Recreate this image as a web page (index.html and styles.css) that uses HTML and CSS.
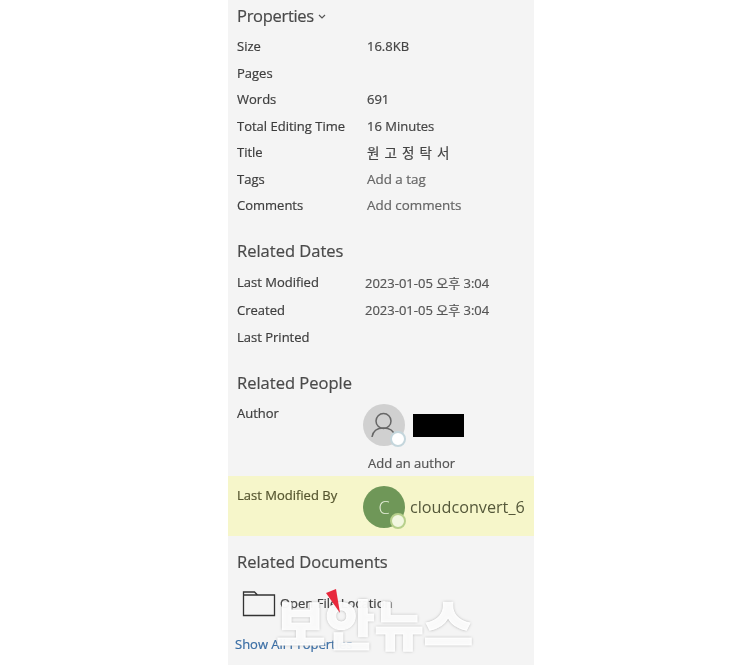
FILE: index.html
```html
<!DOCTYPE html>
<html lang="en">
<head>
<meta charset="utf-8">
<title>Properties</title>
<link rel="stylesheet" href="styles.css">
</head>
<body>
<main class="panel">
  <h2 class="head head-props">Properties <span class="caret"><svg viewBox="0 0 8 5" width="8" height="5"><path d="M1 1l3 3 3-3" fill="none" stroke="#555" stroke-width="1.2"/></svg></span></h2>
  <div class="rows">
    <div class="row"><span class="key">Size</span><span class="val">16.8KB</span></div>
    <div class="row"><span class="key">Pages</span><span class="val"></span></div>
    <div class="row"><span class="key">Words</span><span class="val">691</span></div>
    <div class="row"><span class="key">Total Editing Time</span><span class="val">16 Minutes</span></div>
    <div class="row"><span class="key">Title</span><span class="val val-title">원 고 정 탁 서</span></div>
    <div class="row"><span class="key">Tags</span><span class="val val-muted">Add a tag</span></div>
    <div class="row"><span class="key">Comments</span><span class="val val-muted">Add comments</span></div>
  </div>
  <h2 class="head head-dates">Related Dates</h2>
  <div class="rows rows-dates">
    <div class="row"><span class="key">Last Modified</span><span class="val val-date">2023-01-05 오후 3:04</span></div>
    <div class="row"><span class="key">Created</span><span class="val val-date">2023-01-05 오후 3:04</span></div>
    <div class="row"><span class="key">Last Printed</span><span class="val"></span></div>
  </div>
  <h2 class="head head-people">Related People</h2>
  <div class="person person-author">
    <span class="key">Author</span>
    <div class="who">
      <div class="avatar avatar-grey">
        <svg viewBox="0 0 42 42" width="42" height="42"><circle cx="20.500" cy="17" r="7.500" fill="none" stroke="#666" stroke-width="1.500"/><path d="M9 33c1-6.500 5.500-9 11.500-9s10 2 11.500 8" fill="none" stroke="#666" stroke-width="1.500"/></svg>
        <span class="status"></span>
      </div>
      <span class="redact"></span>
    </div>
  </div>
  <div class="add-author">Add an author</div>
  <div class="person person-mod">
    <span class="key">Last Modified By</span>
    <div class="who">
      <div class="avatar avatar-green">C<span class="status status-green"></span></div>
      <span class="name">cloudconvert_6</span>
    </div>
  </div>
  <h2 class="head head-docs">Related Documents</h2>
  <div class="file-loc">
    <svg class="folder" viewBox="0 0 34 27" width="34" height="27"><path d="M1.500 25.500V2h11l3 3h17v20.500zM1.500 5h14" fill="none" stroke="#333" stroke-width="1.300"/></svg>
    <span class="file-text">Open File Location</span>
  </div>
  <div class="show-all">Show All Properties</div>
  <div class="mark">보안뉴스</div>
  <svg class="wedge" viewBox="0 0 16 26" width="16" height="26"><path d="M0 5l10-4 4 24z" fill="#e8283c"/></svg>
</main>
</body>
</html>
```
FILE: styles.css
```css
html, body { margin: 0; padding: 0; background: #fff; }
body { width: 750px; height: 665px; overflow: hidden; font-family: "Open Sans", "Noto Sans CJK KR", sans-serif; color: #444; }
.panel { position: relative; box-sizing: border-box; width: 306px; height: 665px; margin-left: 228px; padding-left: 9px; background: #f4f4f4; overflow: hidden; filter: blur(.35px); -webkit-text-stroke: .2px; }
.head { margin: 0; font-size: 16.5px; font-weight: 400; line-height: 22px; color: #4a4a4a; }
.head-props { padding-top: 2px; letter-spacing: -.3px; }
.caret { display: inline-block; vertical-align: 3px; }
.head-dates { margin-top: 21px; }
.head-people { margin-top: 21px; }
.head-docs { margin-top: 15px; }
.rows { margin-top: 6px; }
.rows-dates { margin-top: 7px; }
.row { display: flex; height: 26.500px; align-items: center; font-size: 13px; }
.rows-dates .row { height: 27.500px; }
.key { width: 130px; flex: none; font-size: 13px; color: #3d3d3d; }
.val { color: #444; }
.val-muted { font-size: 13.400px; color: #666; }
.val-title { letter-spacing: .8px; font-size: 13.500px; }
.val-date { margin-left: -2px; color: #555; }
.person { display: flex; }
.person-author { margin-top: 9px; height: 44px; }
.person-author .key { padding-top: 1px; }
.who { display: flex; align-items: center; gap: 8px; margin-left: -4px; height: 44px; }
.avatar { position: relative; width: 42px; height: 42px; border-radius: 50%; flex: none; display: flex; align-items: center; justify-content: center; }
.avatar-grey { background: #d0d0d0; }
.avatar-green { background: #6f9758; color: #e8f0dc; font-size: 18px; font-weight: 300; -webkit-text-stroke: 0; }
.status { position: absolute; right: -1px; bottom: -1px; box-sizing: border-box; width: 16px; height: 16px; border-radius: 50%; background: #fff; border: 2px solid #c4d6dc; }
.status-green { background: #f2f7e0; border-color: #b7d08c; }
.redact { width: 51px; height: 23px; margin-top: 1px; background: #000; }
.add-author { margin: 7px 0 0 130px; padding-left: 1px; font-size: 13px; line-height: 18px; color: #555; }
.person-mod { margin: 4px 0 0 -9px; padding: 9px 0 0 9px; height: 51px; box-sizing: content-box; background: #f6f6ca; }
.person-mod .who { gap: 5px; }
.person-mod .key { padding-top: 1px; color: #55552f; }
.name { font-size: 16.200px; color: #55583a; -webkit-text-stroke: 0; }
.file-loc { display: flex; align-items: center; gap: 4px; margin: 15px 0 0 5px; height: 30px; }
.file-text { font-size: 13px; color: #444; }
.show-all { margin: 17px 0 0 -2px; font-size: 13px; line-height: 18px; color: #3a6ea5; }
.mark { position: absolute; left: 48px; top: 588px; font: 900 54px/70px "Noto Sans CJK KR", sans-serif; letter-spacing: -.5px; color: rgba(255,255,255,.94); -webkit-text-stroke: 1px rgba(255,255,255,.94); text-shadow: 0 0 3px rgba(90,90,90,.55); white-space: nowrap; }
.wedge { position: absolute; left: 98px; top: 588px; }
```
